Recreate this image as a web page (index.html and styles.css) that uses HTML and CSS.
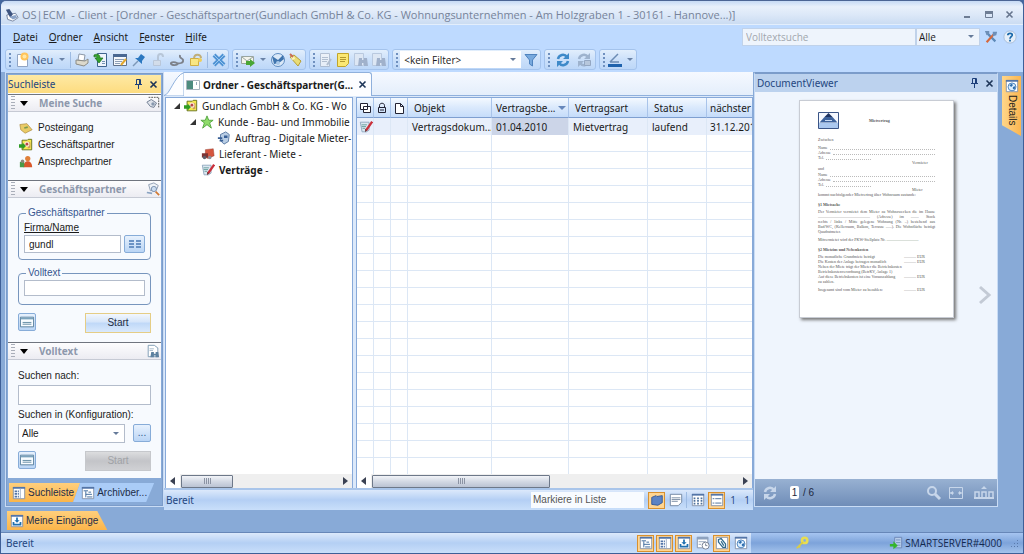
FILE: index.html
```html
<!DOCTYPE html>
<html lang="de">
<head>
<meta charset="utf-8">
<title>OS|ECM - Client</title>
<link rel="stylesheet" href="styles.css">
</head>
<body>
<svg class="defs" aria-hidden="true">
  <symbol id="tree" viewBox="0 0 16 16"><path fill="#fff" stroke="#7f8ea6" d="M1.500 1.500h13v13h-13z"/><path fill="#5375a8" d="M1 1h14v2H1z"/><path stroke="#2b5d94" fill="none" d="M3 5.500h5M5.500 6v7M5.500 9.500h7M7 12.500h6M8.500 7h3"/></symbol>
  <symbol id="panel" viewBox="0 0 16 16"><path fill="#fff" stroke="#7f8ea6" d="M1.500 1.500h13v13h-13z"/><path fill="#5375a8" d="M1 1h14v2H1zM3 5h3v2H3zM3 8h3v2H3zM3 11h3v2H3zM7 5h1v2H7zM7 8h1v2H7zM7 11h1v2H7z"/><path stroke="#9badc8" d="M9.500 3v11"/></symbol>
  <symbol id="inbox" viewBox="0 0 16 16"><path fill="#fff" stroke="#7f8ea6" d="M1.500 1.500h13v13h-13z"/><path fill="#5375a8" d="M1 1h14v2H1z"/><path fill="#1f70b0" d="M7 4h2v3h2L8 10 5 7h2zM3 9h2v2h6V9h2v4H3z"/></symbol>
  <symbol id="globe" viewBox="0 0 16 16"><path fill="#fff" stroke="#7f8ea6" d="M1.500 1.500h13v13h-13z"/><path fill="#5375a8" d="M1 1h14v2H1z"/><circle cx="8" cy="9" r="4.500" fill="#dceeff" stroke="#3a77b8"/><path fill="#2f6fae" d="M5 7l3-2 1 2-2 2zM9 9l3-1-1 4-2-1z"/></symbol>
  <symbol id="list" viewBox="0 0 16 16"><path fill="#fff" stroke="#7f8ea6" d="M1.500 1.500h13v13h-13z"/><path fill="#5375a8" d="M1 1h14v2H1z"/><path stroke="#3d6590" d="M3 6.500h2M6 6.500h7M3 11.500h2M6 11.500h7"/></symbol>
  <symbol id="cells" viewBox="0 0 16 16"><path fill="#fff" stroke="#7f8ea6" d="M1.500 1.500h13v13h-13z"/><path fill="#5375a8" d="M1 1h14v2H1z"/><path stroke="#4e719c" stroke-width="2" stroke-dasharray="2 2" d="M3 6h10M3 9h10M3 12h10"/></symbol>
  <symbol id="form" viewBox="0 0 18 16"><path fill="#f8fcff" stroke="#4f7896" d="M1.500 2.500h15v11h-15z"/><path fill="#7ba3bd" d="M2 3h14v2H2z"/><path stroke="#55809a" d="M4 8.500h10M4 10.500h10"/></symbol>
  <symbol id="pin" viewBox="0 0 9 10"><path fill="none" stroke="#1d3f7a" d="M2.500 5V.5h4V5M1 5.500h7M4.500 6v4"/><path stroke="#1d3f7a" d="M5.500 1v4"/></symbol>
  <symbol id="cross" viewBox="0 0 9 9"><path fill="none" stroke="currentColor" stroke-width="1.600" d="M1.500 1.500l6 6M7.500 1.500l-6 6"/></symbol>
  <symbol id="partner" viewBox="0 0 16 16"><path fill="#f4ea4e" stroke="#5f6a16" d="M3.500 2.500h6l1-1h4v12h-11z"/><path fill="#cf9b5c" d="M10 4l3 1v6l-3 1z"/><circle cx="9" cy="7" r="3" fill="#f8e3cb"/><path fill="#2f9c24" d="M0 7h4V5l4 4-4 4v-2H0z"/><circle cx="9" cy="7" r="1.500" fill="#b8434a"/></symbol>
  <symbol id="contract" viewBox="0 0 16 16"><path fill="#dbe7f1" stroke="#8ba5bb" d="M1.500 2.500h10v9l-3 2h-5z"/><path stroke="#5f9a96" d="M3 5.500h6M3 7.500h5M4 9.500h3"/><path stroke="#c9303b" stroke-width="2.500" d="M15 2L8 12"/><path fill="#633" d="M7 14l0-4 2 2z"/></symbol>
  <symbol id="refresh" viewBox="0 0 16 16"><path fill="none" stroke="currentColor" stroke-width="2.500" d="M3 7a5 5 0 0 1 9-2M13 9a5 5 0 0 1-9 2"/><path fill="currentColor" d="M14 1v6H8zM2 15V9h6z"/></symbol>
  <symbol id="binoc" viewBox="0 0 16 16"><path fill="#dde7f4" stroke="#b9c9df" d="M1.500 1.500h9v12h-9z"/><path fill="#a0b1cb" d="M6 6h3v2h2V6h3l1 8h-4v-3H9v3H5z"/></symbol>
</svg>

<div class="app">
  <header class="titlebar">
    <svg class="i16" viewBox="0 0 16 16"><path fill="#fff" stroke="#6b7c99" d="M2 8l10-2 3 5-6 4-6-2z"/><path fill="#3d5480" d="M1 2l4-1 4 6-3 4z"/><path fill="#8ba4c9" d="M5 10l7-2 2 3-5 2z"/></svg>
    <h1>OS|ECM &nbsp;- Client - [Ordner - Geschäftspartner(Gundlach GmbH &amp; Co. KG - Wohnungsunternehmen - Am Holzgraben 1 - 30161 - Hannove...)]</h1>
    <div class="winbtns">
      <button aria-label="Minimieren"><svg viewBox="0 0 9 9"><path fill="#6e7d94" d="M1 6h6v2H1z"/></svg></button>
      <button aria-label="Maximieren"><svg viewBox="0 0 9 9"><path fill="#6e7d94" d="M1 1h8v3H1z"/><path fill="none" stroke="#6e7d94" d="M1.500 1.500h7v6h-7z"/></svg></button>
      <button aria-label="Schließen"><svg viewBox="0 0 9 9"><use href="#cross"/></svg></button>
    </div>
  </header>

  <div class="menubar">
    <nav>
      <button><u>D</u>atei</button><button><u>O</u>rdner</button><button><u>A</u>nsicht</button><button><u>F</u>enster</button><button><u>H</u>ilfe</button>
    </nav>
    <div class="quick">
      <input type="text" placeholder="Volltextsuche" aria-label="Volltextsuche">
      <select aria-label="Suchbereich"><option>Alle</option></select>
      <button aria-label="Optionen"><svg class="i14" viewBox="0 0 16 16"><path stroke="#5d89b8" stroke-width="2.500" d="M3 3l10 10"/><path stroke="#d6683c" stroke-width="2.500" d="M11 5l-8 9"/><path fill="#6d8fb8" d="M1 1h5v3L3 6zM10 2l5 0-1 4-4 1z"/></svg></button>
      <button aria-label="Hilfe"><svg class="i14" viewBox="0 0 16 16"><circle cx="8" cy="8" r="7" fill="#e5effa" stroke="#a7bbd6"/><path fill="none" stroke="#1968aa" stroke-width="2" d="M5.500 6C5.500 3 11 3 10.500 6 10 7.500 8 8 8 10"/><path fill="#1968aa" d="M7 11h2v2H7z"/></svg></button>
    </div>
  </div>

  <div class="toolbars">
    <div class="tb tb1">
      <button class="new"><svg class="i16" viewBox="0 0 16 16"><path fill="#fff" stroke="#91a5c4" d="M3.500 2.500h6l4 4v8h-10z"/><circle cx="10.500" cy="4.500" r="4" fill="#ffc45c"/><circle cx="10.500" cy="4.500" r="2" fill="#ffe7a6"/></svg>Neu<i class="arr"></i></button>
      <i class="sep"></i>
      <button aria-label="Drucken"><svg class="i16" viewBox="0 0 16 16"><path fill="#fff" stroke="#8c98a8" d="M5 2l6 1-1 6-6-1z"/><path fill="#dcd9cc" stroke="#8b8b85" d="M2 8l9 1 3-2v4l-4 3-8-2z"/></svg></button>
      <button aria-label="Öffnen"><svg class="i16" viewBox="0 0 16 16"><path fill="#eef4fb" stroke="#3f648e" d="M4.500 1.500h9v13h-9z"/><path stroke="#7292b5" d="M9 9.500h3M9 11.500h3"/><path fill="#34a22d" stroke="#1a6e1a" stroke-width=".7" d="M1 3c4-2 6 0 6 3h3l-4 5-4-5h2C4 5 3 4 1 5z"/></svg></button>
      <button aria-label="Bearbeiten"><svg class="i16" viewBox="0 0 16 16"><path fill="#f5f8fc" stroke="#60718a" d="M1.500 2.500h13v11h-13z"/><path fill="#4a6892" d="M1 2h14v3H1z"/><path stroke="#8e9fb6" d="M3 7.500h9M3 9.500h7M3 11.500h5"/><path stroke="#e2a72c" stroke-width="2" d="M14 7l-5 6"/></svg></button>
      <button aria-label="Anheften"><svg class="i16" viewBox="0 0 16 16"><path stroke="#7d97b8" stroke-width="1.500" d="M2 14l5-5"/><path fill="#2c78c0" d="M4 6l3 0 3-4 4 3-3 4 0 3z"/></svg></button>
      <button aria-label="Entsperren" class="dim"><svg class="i16" viewBox="0 0 16 16"><path fill="none" stroke="#aebccd" stroke-width="2" d="M8 9V5c0-4 5-4 5 0"/><path fill="#d7dde5" stroke="#b6c0cf" d="M3.500 8.500h7v5h-7z"/></svg></button>
      <button aria-label="Verknüpfen"><svg class="i16" viewBox="0 0 16 16"><path fill="none" stroke="#7d828b" stroke-width="1.800" d="M9 12c-3 2-8 1-7-1 1-1 4-1 6 0s7 0 6-3c0-2-4-1-3-5"/></svg></button>
      <button aria-label="Rechte"><svg class="i16" viewBox="0 0 16 16"><path fill="none" stroke="#bfae7a" stroke-width="2" d="M6 7c0-6 7-5 7-1"/><path fill="#f8e683" stroke="#cfae45" d="M2.500 6.500h8v7h-8z"/><circle cx="12" cy="8" r="2" fill="#f0ce58"/></svg></button>
      <i class="sep"></i>
      <button aria-label="Löschen"><svg class="i16" viewBox="0 0 16 16"><path stroke="#4f93d4" stroke-width="4" d="M3 3l10 10M13 3L3 13"/><path stroke="#9cc8ef" d="M3 3l10 10M13 3L3 13"/></svg></button>
    </div>
    <div class="tb">
      <button aria-label="Senden"><svg class="i16" viewBox="0 0 16 16"><path fill="#f4f4ec" stroke="#9aa59f" d="M1.500 4.500h12v7h-12z"/><path fill="none" stroke="#9aa59f" d="M2 5l5 4 6-4"/><path fill="#49a634" d="M6 9h4V7l5 4-5 4v-2H6z"/></svg></button><i class="arr"></i>
      <button aria-label="Wiedervorlage"><svg class="i16" viewBox="0 0 16 16"><circle cx="8" cy="8" r="6.500" fill="#dbe9f8" stroke="#5f8dc0"/><path fill="#3f74ae" d="M2 4l6 4 5-5 1 4-5 4-5 1z"/><circle cx="8" cy="11" r="2" fill="#a9c8e8"/></svg></button>
      <button aria-label="Markieren"><svg class="i16" viewBox="0 0 16 16"><path fill="#e9dc76" stroke="#b59e37" d="M2 5l4-2 7 6-3 5z"/><path fill="#fbf5b7" d="M3 5l3-1 1 3-3 1z"/><path stroke="#c96d56" stroke-width="2" d="M2 2l3 3"/></svg></button>
    </div>
    <div class="tb">
      <button class="dim" aria-label="Dokument"><svg class="i16" viewBox="0 0 16 16"><path fill="#f3f5f8" stroke="#a6b3c6" d="M3.500 1.500h9v13h-9z"/><path stroke="#aab4c2" d="M5 5.500h6M5 7.500h6M5 9.500h5"/><path stroke="#aab4c2" stroke-width="2" d="M14 7l-4 6"/></svg></button>
      <button aria-label="Notiz"><svg class="i16" viewBox="0 0 16 16"><path fill="#fbe873" stroke="#c0a52b" d="M2.500 1.500h11v10l-3 3h-8z"/><path stroke="#b49a30" d="M5 5.500h6M5 7.500h6M5 9.500h5"/></svg></button>
      <button aria-label="Suchen"><svg class="i16"><use href="#binoc"/></svg></button>
      <button aria-label="Weitersuchen"><svg class="i16"><use href="#binoc"/></svg></button>
    </div>
    <div class="tb">
      <select class="filter" aria-label="Filter"><option>&lt;kein Filter&gt;</option></select>
      <button aria-label="Filtern"><svg class="i16" viewBox="0 0 16 16"><path fill="#78a9dd" stroke="#4f83be" d="M2 2.500h12L9.500 8v6l-3-2V8z"/></svg></button>
    </div>
    <div class="tb wide-gap">
      <button class="blue" aria-label="Aktualisieren"><svg class="i16"><use href="#refresh"/></svg></button>
      <button class="gray" aria-label="Anhalten"><svg class="i16" viewBox="0 0 16 16"><use href="#refresh"/><path fill="#b7c7dc" stroke="#94a7c2" d="M8.500 8.500h6v5h-6z"/></svg></button>
    </div>
    <div class="tb">
      <button aria-label="Zeichnen"><svg class="i16" viewBox="0 0 16 16"><path fill="#1e62ad" d="M1 12h14v3H1z"/><path fill="none" stroke="#6c8cb4" stroke-width="1.500" d="M3 10l8-8M3 10h9"/></svg></button><i class="arr"></i>
    </div>
  </div>

  <div class="work">
    <aside class="side">
      <div class="cap gold"><h2>Suchleiste</h2><button aria-label="Anheften"><svg class="pin"><use href="#pin"/></svg></button><button aria-label="Schließen"><svg class="x9"><use href="#cross"/></svg></button></div>
      <div class="sidebody">
        <section>
          <h3><i class="grip"></i><i class="tri"></i><span>Meine Suche</span><svg class="i14" viewBox="0 0 16 16"><path fill="none" stroke="#444" stroke-dasharray="2 1" d="M3 1.500h11.500V14"/><path fill="#dfe3ea" stroke="#66748a" d="M1 7l5-3 6 4-3 5-4-1z"/><circle cx="8" cy="9" r="2" fill="#8898ae"/></svg></h3>
          <ul class="links">
            <li><a href="#"><svg class="i14" viewBox="0 0 16 16"><path fill="#e9cb67" stroke="#a47f2f" stroke-width=".7" d="M1 4l8-1 6 7-8 4-5-4z"/><path stroke="#7a9a4c" stroke-width="2" d="M6 8l4-1"/></svg>Posteingang</a></li>
            <li><a href="#"><svg class="i14"><use href="#partner"/></svg>Geschäftspartner</a></li>
            <li><a href="#"><svg class="i14" viewBox="0 0 16 16"><circle cx="10" cy="4" r="3" fill="#e0803a"/><path fill="#d9572b" d="M5 14c0-9 10-9 10 0z"/><path fill="#4a9a48" d="M1 8h5v6H1z"/><circle cx="4" cy="7" r="2" fill="#8d8a7c"/></svg>Ansprechpartner</a></li>
          </ul>
        </section>
        <section>
          <h3><i class="grip"></i><i class="tri"></i><span>Geschäftspartner</span><svg class="i14" viewBox="0 0 16 16"><path fill="#eef2f7" stroke="#8998ae" d="M3 3l6-2 5 3-2 5-7 1z"/><circle cx="9" cy="8" r="3" fill="#cbdcf0" stroke="#7289a8"/><path fill="none" stroke="#8aa3c2" stroke-width="2" d="M1 12l6 1"/><path stroke="#d27a34" stroke-width="2" d="M11 11l4 4"/></svg></h3>
          <form class="form">
            <fieldset><legend>Geschäftspartner</legend>
              <label for="firma"><u>Firma/Name</u></label>
              <div class="line"><input id="firma" type="text" value="gundl"><button type="button" class="sq wide" aria-label="Auswahl"><svg viewBox="0 0 14 10"><path stroke="#6b93c5" stroke-width="2" d="M1 2h5M8 2h5M1 5h5M8 5h5M1 8h5M8 8h5"/></svg></button></div>
            </fieldset>
            <fieldset><legend>Volltext</legend><input type="text" aria-label="Volltext"></fieldset>
            <div class="acts"><button type="button" class="sq" aria-label="Maske"><svg><use href="#form"/></svg></button><button type="button" class="start">Start</button></div>
          </form>
        </section>
        <section>
          <h3><i class="grip"></i><i class="tri"></i><span>Volltext</span><svg class="i14" viewBox="0 0 16 16"><path fill="#fff" stroke="#7595af" d="M2.500 1.500h7l4 3v10h-11z"/><path stroke="#9db3c6" d="M4 5.500h5M4 7.500h4"/><path fill="#5c81a0" d="M6 9h3v2h2V9h3l1 6h-4v-2H9v2H5z"/></svg></h3>
          <form class="form low">
            <label for="nach">Suchen nach:</label>
            <input id="nach" type="text" class="tall">
            <label for="konf">Suchen in (Konfiguration):</label>
            <div class="line"><select id="konf"><option>Alle</option></select><button type="button" class="sq" aria-label="Mehr">...</button></div>
            <div class="acts"><button type="button" class="sq" aria-label="Maske"><svg><use href="#form"/></svg></button><button type="button" class="start" disabled>Start</button></div>
          </form>
        </section>
      </div>
      <div class="tabs">
        <button class="tab on"><svg class="i14"><use href="#panel"/></svg>Suchleiste</button><button class="tab"><svg class="i14"><use href="#tree"/></svg>Archivber...</button>
      </div>
    </aside>

    <main class="center">
      <div class="doctabs">
        <svg class="slope" viewBox="0 0 20 24" preserveAspectRatio="none"><path fill="#fcfdff" stroke="#8fb0dc" d="M0 23.500C6 23 10 4 20 .5V24H0"/></svg>
        <div class="doctab"><svg class="i14" viewBox="0 0 14 14"><path fill="#fff" stroke="#a7b3bd" d="M.5 2.500h13v9H.5z"/><path fill="#4d8b7e" d="M1 3h6v8H1z"/><path fill="#9ab" d="M10 4h1v3h-1z"/></svg><span>Ordner - Geschäftspartner(G...</span><button aria-label="Schließen"><svg class="x9"><use href="#cross"/></svg></button></div>
      </div>
      <div class="panes">
        <div class="pane treepane">
          <ul class="tree">
            <li class="l1"><i class="exp"></i><svg class="i14"><use href="#partner"/></svg>Gundlach GmbH &amp; Co. KG - Wo</li>
            <li class="l2"><i class="exp"></i><svg class="i14" viewBox="0 0 16 16"><path fill="#8fdc6a" stroke="#4fa23c" d="M8 1l2 5 5 0-4 3 2 6-5-4-5 4 2-6-4-3 5 0z"/></svg>Kunde - Bau- und Immobilie</li>
            <li class="l3"><svg class="i14" viewBox="0 0 16 16"><path fill="#b9cde4" stroke="#52749e" d="M4 4l6-3 4 3-1 8-5 3-4-4z"/><path fill="#385f95" d="M1 7h5v2H1zM3 10h4v2H3zM8 5h4v3H8z"/></svg>Auftrag - Digitale Mieter-</li>
            <li class="l2b"><svg class="i14" viewBox="0 0 16 16"><path fill="#d5563f" stroke="#8f3023" stroke-width=".5" d="M5 3l9-1 1 8-7 3-3-1z"/><path fill="#7d3434" d="M1 7h7v5H1z"/><circle cx="4" cy="12" r="2" fill="#5d5d68"/><circle cx="10" cy="12" r="2" fill="#8d8d96"/></svg>Lieferant - Miete -</li>
            <li class="l2b"><svg class="i14"><use href="#contract"/></svg><span><b>Verträge</b> -</span></li>
          </ul>
          <div class="hs"><i class="la"></i><i class="thumb t1"></i><i class="ra"></i></div>
        </div>
        <div class="pane gridpane">
          <div class="gridwrap">
            <table class="grid">
              <colgroup><col class="c1"><col class="c1"><col class="c1"><col class="c4"><col class="c5"><col class="c6"><col class="c7"><col class="c8"></colgroup>
              <thead><tr>
                <th><svg class="i12" viewBox="0 0 12 12"><path fill="#fff" stroke="#223" d="M1.500 1.500h7v6h-7zM4.500 4.500h7v6h-7z"/></svg></th>
                <th><svg class="i12" viewBox="0 0 12 12"><path fill="none" stroke="#223" d="M3.500 5V3.500c0-3 5-3 5 0V5M2.500 5.500h7v5h-7zM4 8h4"/></svg></th>
                <th><svg class="i12" viewBox="0 0 12 12"><path fill="#fff" stroke="#223" d="M2.500 1.500h5l3 3v7h-8zM7.500 1.500v3h3"/></svg></th>
                <th>Objekt</th><th>Vertragsbe...<i class="sort"></i></th><th>Vertragsart</th><th>Status</th><th>nächster</th>
              </tr></thead>
              <tbody>
                <tr class="sel"><td><svg class="i14"><use href="#contract"/></svg></td><td></td><td></td><td>Vertragsdokum...</td><td class="cur">01.04.2010</td><td>Mietvertrag</td><td>laufend</td><td>31.12.201</td></tr>
                <tr class="fill"><td></td><td></td><td></td><td></td><td></td><td></td><td></td><td></td></tr>
              </tbody>
            </table>
          </div>
          <div class="hs"><i class="la"></i><i class="thumb t2"></i><i class="ra"></i></div>
        </div>
      </div>
      <div class="docstatus">
        <span class="msg">Bereit</span>
        <input type="text" value="Markiere in Liste" aria-label="Markiere in Liste">
        <button class="ic act" aria-label="Ordner"><svg viewBox="0 0 16 16"><path fill="#5c83c4" stroke="#2f5596" d="M2 5l5-2 1 1 6-1v8l-5 3-7-1z"/></svg></button>
        <button class="ic" aria-label="Notiz"><svg viewBox="0 0 16 16"><path fill="#fff" stroke="#697f9c" d="M1.500 1.500h13v9l-4 4h-9z"/><path stroke="#6f829c" d="M3 5.500h10M3 7.500h10M3 9.500h7"/></svg></button>
        <i class="sep"></i>
        <button class="ic" aria-label="Kacheln"><svg><use href="#cells"/></svg></button>
        <button class="ic act" aria-label="Liste"><svg><use href="#list"/></svg></button>
        <span class="num">1</span><span class="num">1</span>
      </div>
    </main>

    <section class="viewer">
      <div class="cap"><h2>DocumentViewer</h2><button aria-label="Anheften"><svg class="pin"><use href="#pin"/></svg></button><button aria-label="Schließen"><svg class="x9"><use href="#cross"/></svg></button></div>
      <div class="stage">
        <article class="sheet">
          <div class="head"><svg viewBox="0 0 21 17"><path fill="#f5f8ff" stroke="#3a5486" d="M.5.500h20v16H.5z"/><path fill="#abc8ef" d="M1 11h19v5H1z"/><path fill="#1d3261" d="M10.500 1l4 4h-8z"/><path fill="#3d629c" d="M6.500 5h8l5 5.500h-18z"/><path stroke="#c9daf2" d="M7 8.500h7"/></svg><b>Mietvertrag</b></div>
          <p class="gap">Zwischen</p>
          <p class="fill">Name</p><p class="fill">Adresse</p><p class="fill half">Tel.</p><p class="who">Vermieter</p>
          <p class="und">und</p>
          <p class="fill">Name</p><p class="fill">Adresse</p><p class="fill half">Tel.</p><p class="who">Mieter</p>
          <p>kommt nachfolgender Mietvertrag über Wohnraum zustande:</p>
          <h4>§1 Mietsache</h4>
          <p class="j">Der Vermieter vermietet dem Mieter zu Wohnzwecken die im Hause</p>
          <p class="j">.................................................... (Adresse) im ........ Stock</p>
          <p class="j">rechts / links / Mitte gelegene Wohnung (Nr. ..) bestehend aus</p>
          <p class="j">Bad/WC, (Kellerraum, Balkon, Terrasse ......). Die Wohnfläche beträgt</p>
          <p class="gap">Quadratmeter.</p>
          <p>Mitvermietet wird der PKW-Stellplatz Nr. ................................</p>
          <h4>§2 Mietzins und Nebenkosten</h4>
          <p class="eur"><span>Die monatliche Grundmiete beträgt</span><span>............ EUR</span></p>
          <p class="eur"><span>Die Kosten der Anlage betragen monatlich</span><span>............ EUR</span></p>
          <p class="eur"><span>Neben der Miete trägt der Mieter die Betriebskosten<br>Betriebskostenverordnung (BetrKV, Anlage 1)</span><span></span></p>
          <p class="eur"><span>Auf diese Betriebskosten ist eine Vorauszahlung<br>zu zahlen.</span><span>............ EUR</span></p>
          <p class="eur last"><span>Insgesamt sind vom Mieter zu bezahlen:</span><span>............ EUR</span></p>
        </article>
        <button class="next" aria-label="Nächste Seite"><svg viewBox="0 0 14 20"><path fill="none" stroke="#c3cad5" stroke-width="3" d="M2 2l9 8-9 8"/></svg></button>
      </div>
      <div class="vbar">
        <button aria-label="Aktualisieren"><svg class="i16"><use href="#refresh"/></svg></button>
        <label class="page"><input type="text" value="1" aria-label="Seite"> / 6</label>
        <button class="push" aria-label="Zoom"><svg class="i16" viewBox="0 0 16 16"><circle cx="6" cy="6" r="4" fill="none" stroke="currentColor" stroke-width="2"/><path stroke="currentColor" stroke-width="3" d="M9 9l5 5"/></svg></button>
        <button aria-label="Breite"><svg class="i16" viewBox="0 0 16 16"><path fill="none" stroke="currentColor" d="M1.500 2.500h13v11h-13zM2 8h4M10 8h4"/><path fill="currentColor" d="M2 8l3-2v4zM14 8l-3-2v4z"/></svg></button>
        <button class="pages" aria-label="Seiten"><svg class="i20" viewBox="0 0 20 16"><path fill="none" stroke="currentColor" stroke-width="1.500" d="M1 7h4v6H1zM8 7h4v6H8zM15 7h4v6h-4z"/><path fill="currentColor" d="M0 12h20v2H0zM10 1l3 3H7z"/></svg></button>
      </div>
    </section>

    <div class="rail"><button><svg class="i14"><use href="#globe"/></svg><span>Details</span></button></div>
  </div>

  <div class="tabs bottom"><button class="tab on"><svg class="i14"><use href="#inbox"/></svg>Meine Eingänge</button></div>

  <footer class="status">
    <span class="msg">Bereit</span>
    <button class="ic act" aria-label="Baum"><svg><use href="#tree"/></svg></button>
    <button class="ic act" aria-label="Suchleiste"><svg><use href="#panel"/></svg></button>
    <button class="ic act" aria-label="Eingänge"><svg><use href="#inbox"/></svg></button>
    <button class="ic" aria-label="Verlauf"><svg viewBox="0 0 16 16"><path fill="#fff" stroke="#7f8ea6" d="M1.500 1.500h12v12h-12z"/><path fill="#8da2bf" d="M1 1h13v3H1z"/><path stroke="#8ea0b8" d="M3 6.500h8M3 9.500h3"/><circle cx="11" cy="11" r="4" fill="#fff" stroke="#6b7688"/><path fill="none" stroke="#6b7688" d="M11 8.500V11h2"/></svg></button>
    <button class="ic act" aria-label="Anlagen"><svg viewBox="0 0 16 16"><path fill="#fff" stroke="#7f8ea6" d="M1.500 1.500h13v13h-13z"/><path fill="none" stroke="#2f6a8e" stroke-width="1.500" d="M4 4l3-1 5 6v4H9L4 7zM7 6l3 5"/></svg></button>
    <button class="ic" aria-label="Web"><svg><use href="#globe"/></svg></button>
    <div class="server">
      <svg class="i14" viewBox="0 0 16 16"><circle cx="11" cy="5" r="3" fill="none" stroke="#e8dd52" stroke-width="3"/><path stroke="#d9cc45" stroke-width="2" d="M9 7l-7 7M4 11l2 2"/></svg>
      <span><svg class="i14" viewBox="0 0 16 16"><path fill="#b7cdea" stroke="#6a84b3" d="M6.500 1.500h8v12h-8z"/><path stroke="#7590bd" d="M8 4.500h5M8 7.500h5M8 10.500h5"/><path fill="#35b52c" d="M1 9h4V6l5 5-5 4v-3H1z"/></svg>SMARTSERVER#4000</span>
      <i class="size"></i>
    </div>
  </footer>
</div>
</body>
</html>
```
FILE: styles.css
```css
* { box-sizing: border-box; }
body { margin: 0; color: #1a1a1a; font: 11px/16px "Open Sans", "Noto Sans", sans-serif; background: #44679f; }
h1, h2, h3, h4, p, ul, fieldset { margin: 0; padding: 0; font-weight: normal; list-style: none; }
button, input, select { font: inherit; color: inherit; margin: 0; padding: 0; border: 0; border-radius: 0; background: none; min-width: 0; }
button { display: flex; align-items: center; justify-content: center; flex: none; }
svg { display: block; flex: none; }
i { flex: none; }
.defs { display: none; }
.i12 { width: 12px; height: 12px; }
.i14 { width: 14px; height: 14px; }
.i16 { width: 16px; height: 16px; }
.i20 { width: 20px; height: 16px; }
.x9 { width: 9px; height: 9px; color: #1d3558; }
.pin { width: 9px; height: 10px; }
.app { height: 100vh; display: flex; flex-direction: column; background: #88aad7; border: 1px solid #3e5f97; border-top-color: #4c6595; border-radius: 6px 6px 0 0; overflow: hidden; }

.titlebar { flex: none; height: 24px; display: flex; align-items: center; gap: 3px; padding: 4px 9px 0 4px; background: linear-gradient(#c6daf5, #e8f0fb 25%, #dce8f8 60%, #cbdcf2); border-bottom: 1px solid #e3eefc; color: #76839a; }
.titlebar .i16 { width: 14px; }
.titlebar h1 { flex: 1; font-size: inherit; white-space: nowrap; overflow: hidden; }
.winbtns { display: flex; gap: 12px; color: #66758d; }
.winbtns svg { width: 9px; height: 9px; }

.menubar { flex: none; height: 24px; display: flex; justify-content: space-between; align-items: center; padding: 0 4px 0 12px; background: #bedaff; }
.menubar nav { display: flex; gap: 11px; font: 10px/16px "Noto Sans", sans-serif; }
.quick { display: flex; align-items: center; font-size: 10px; }
.quick input { width: 174px; height: 18px; padding: 0 3px; background: #eef4fc; border: 1px solid #c0d2ea; }
.quick input::placeholder { color: #a2a7ae; opacity: 1; }
.quick select { width: 64px; height: 18px; margin-right: 1px; border: 1px solid #c0d2ea; padding-left: 2px; background-color: #eef4fc; }
.quick button { width: 19px; }
select { appearance: none; background: #fff url("data:image/svg+xml,%3Csvg xmlns='http://www.w3.org/2000/svg' width='11' height='4'%3E%3Cpath fill='%23657a99' d='M0 0h6L3 3z'/%3E%3C/svg%3E") no-repeat right center; }

.toolbars { flex: none; display: flex; gap: 3px; height: 23px; padding: 0 4px; background: #bedaff; }
.tb { display: flex; align-items: center; gap: 2px; height: 21px; padding: 0 1px 0 7px; border: 1px solid #a4c3ec; border-radius: 3px; background: linear-gradient(#e2eefc, #cbe0fa 50%, #bdd7f8); }
.tb1 { gap: 3px; }
.tb::before { content: ""; width: 2px; height: 14px; margin-left: -4px; background: repeating-linear-gradient(#6f90bf 0 2px, transparent 2px 4px); }
.tb button { height: 18px; min-width: 16px; }
.tb .new { gap: 2px; color: #33517f; }
.dim { opacity: .75; }
.arr { border: 3px solid transparent; border-top-color: #6a82a6; border-bottom: 0; margin: 0 2px; }
.tb .new .arr { margin-left: 4px; }
.wide-gap { gap: 5px; padding-right: 3px; }
.sep { width: 1px; height: 16px; background: #9dbbe2; }
.filter { width: 121px; height: 17px; padding-left: 4px; font-size: 10px; }
.blue { color: #3f8ac9; }
.gray { color: #9eb3ce; }

.work { flex: 1; min-height: 0; display: flex; padding-left: 4px; }
.side { flex: none; width: 159px; margin-bottom: 3px; display: flex; flex-direction: column; border: 1px solid #c9dcf5; box-shadow: inset 0 0 0 1px #7b9cca; padding: 2px; font: 10px/16px "Liberation Sans", Arial, sans-serif; }
.cap { flex: none; height: 18px; display: flex; align-items: center; gap: 6px; padding: 0 3px 0 2px; background: #bcd2ee; color: #24477f; font: 10px/16px "Noto Sans", sans-serif; }
.cap h2 { flex: 1; font-size: inherit; }
.gold { background: linear-gradient(#fee9a4, #fddc80); }
.side .cap { height: 18px; padding-left: 0; }
.sidebody { flex: 1; background: #f7fafe; padding-top: 1px; overflow: hidden; }
.side h3 { height: 18px; display: flex; align-items: center; padding: 0 1px 0 3px; border-top: 1px solid #70757f; border-bottom: 1px solid #c6cad4; background: linear-gradient(#fdfdfe, #ececf2); color: #8d98ac; font: bold 10px/16px "Noto Sans", sans-serif; }
.side h3 span { flex: 1; }
.grip { width: 4px; height: 14px; background: repeating-linear-gradient(#a9aeb9 0 1px, transparent 1px 3px); }
.tri { border: 4px solid transparent; border-top: 5px solid #000; border-bottom: 0; margin: 0 11px 0 5px; }
.links { padding: 7px 0 10px 11px; }
.links a { display: flex; align-items: center; gap: 5px; height: 17px; color: inherit; text-decoration: none; }
.form { padding: 8px 10px 9px; display: flex; flex-direction: column; }
fieldset { border: 1px solid #7795bd; border-radius: 4px; padding: 0 5px 6px; min-width: 0; }
fieldset + fieldset { margin-top: 6px; padding-bottom: 8px; }
legend { margin-left: 2px; padding: 0 2px; color: #35558f; line-height: 14px; }
label { line-height: 14px; }
fieldset label { display: block; line-height: 15px; height: 15px; }
.form input { width: 100%; height: 16px; padding: 0 4px; border: 1px solid #b3bccb; background: #fff; display: block; }
.line { display: flex; gap: 3px; }
.form .line input { flex: 1; height: 18px; }
.sq { width: 18px; height: 18px; border: 1px solid #87acd8; border-radius: 2px; background: linear-gradient(#e7f1fd, #bad5f5); color: #2d568e; }
.sq svg { width: 16px; height: 14px; }
.wide { width: 21px; }
.wide svg { width: 14px; height: 10px; }
.acts { display: flex; justify-content: space-between; margin-top: 8px; }
.start { width: 66px; height: 20px; border: 1px solid #e5cd85; background: linear-gradient(#f2f7fe, #d5e5fa 45%, #bfd8f8 50%, #d9e9fc); color: #222c44; }
.start:disabled { border-color: #c6c8cc; background: linear-gradient(#dcdddf, #c3c4c8 50%, #d0d1d4); color: #a0a2a6; }
.low label { margin-bottom: 2px; }
.form .tall { height: 20px; margin-bottom: 3px; }
.low .line { justify-content: space-between; }
.low select { width: 107px; height: 19px; padding-left: 3px; border: 1px solid #b3bccb; }
.low { padding-top: 9px; }
.tabs { flex: none; display: flex; height: 26px; padding: 5px 0 2px 2px; font: 10px/16px "Liberation Sans", Arial, sans-serif; }
.tab { gap: 3px; padding: 0 9px 0 3px; background: #aaccf7; color: #1d2c48; white-space: nowrap; clip-path: polygon(0 0, calc(100% - 8px) 0, 100% 100%, 0 100%); }
.tabs .on { background: linear-gradient(#ffcf7c, #fbb54a); clip-path: polygon(0 0, calc(100% - 1px) 0, calc(100% - 8px) 100%, 0 100%); }
.side .tabs { padding-left: 1px; }
.side .tab { gap: 2px; padding-right: 7px; }
.side .tab + .tab { clip-path: polygon(7px 0, 100% 0, calc(100% - 8px) 100%, 0 100%); margin-left: -8px; padding-left: 8px; }
.bottom { height: 22px; padding: 1px 0 2px 6px; }
.bottom .on { gap: 2px; padding: 0 9px 0 3px; clip-path: polygon(0 0, calc(100% - 10px) 0, 100% 100%, 0 100%); }

.center { flex: 1; min-width: 0; display: flex; flex-direction: column; background: #dce9fa; }
.doctabs { flex: none; height: 24px; display: flex; background: linear-gradient(#f5f9ff, #e4eefb); border-bottom: 1px solid #8fb0dc; }
.slope { width: 20px; height: 24px; }
.doctab { display: flex; align-items: center; gap: 3px; height: 24px; padding: 0 4px 0 2px; background: #fcfdff; border: 1px solid #8fb0dc; border-width: 1px 1px 0 0; border-radius: 0 3px 0 0; font: bold 10px/16px "Noto Sans", sans-serif; }
.doctab button { margin-left: 2px; }
.panes { flex: 1; min-height: 0; display: flex; gap: 3px; padding: 1px 0 0 1px; }
.pane { display: flex; flex-direction: column; min-width: 0; min-height: 0; background: #fff; border: 1px solid #87a9d9; border-bottom: 0; }
.treepane { flex: 0 0 188px; }
.gridpane { flex: 1; }
.tree { flex: 1; overflow: hidden; white-space: nowrap; font: 10px/16px "Noto Sans", sans-serif; }
.tree li { display: flex; align-items: center; gap: 4px; height: 16px; }
.tree .l1 { padding-left: 8px; }
.tree .l2 { padding-left: 24px; }
.tree .l2b { padding-left: 35px; }
.tree .l3 { padding-left: 51px; }
.exp { border-left: 6px solid transparent; border-bottom: 6px solid #333; }
.hs { flex: none; height: 14px; display: flex; align-items: center; padding: 0 4px; background: linear-gradient(90deg, #fff 14px, #efefef 14px); }
.la { border: 4px solid transparent; border-right: 5px solid #3a4152; border-left: 0; margin-right: 6px; }
.ra { border: 4px solid transparent; border-left: 5px solid #3a4152; border-right: 0; margin-left: auto; }
.thumb { height: 13px; border: 1px solid #6d7889; border-radius: 1px; background: repeating-linear-gradient(90deg, #8b93a3 0 1px, transparent 1px 2px) center / 7px 6px no-repeat, linear-gradient(#f2f4f8, #d3d9e4 50%, #bac3d3); }
.t1 { width: 52px; }
.t2 { width: 178px; }
.gridwrap { flex: 1; min-height: 0; overflow: hidden; }
.grid { table-layout: fixed; width: 100%; height: 100%; border-collapse: separate; border-spacing: 0; }
.c1 { width: 17px; }
.c4 { width: 84px; }
.c5 { width: 77px; }
.c6 { width: 79px; }
.c7 { width: 59px; }
.grid th, .grid td { padding: 0 0 0 4px; text-align: left; font: 10px/16px "Noto Sans", sans-serif; white-space: nowrap; overflow: hidden; border-right: 1px solid #dce7f5; }
.grid th { height: 20px; padding-left: 6px; border-right-color: #a9c4ea; border-bottom: 1px solid #7e9fd0; background: linear-gradient(#f4f9ff, #dae9fc 50%, #c5dcfa); }
.grid th:last-child, .grid td:last-child { padding-left: 3px; border-right: 0; }
.grid th:nth-child(-n+3), .grid td:nth-child(-n+3) { padding-left: 2px; }
.grid th:nth-child(5) { padding-left: 4px; }
.grid .sel td { height: 17px; background: #e8effb; }
.grid .sel .cur { background: #ccd5e8; }
.grid .fill td { background: repeating-linear-gradient(transparent 0 16px, #dce7f5 16px 17px); }
.sort { display: inline-block; border: 4px solid transparent; border-top-color: #6687bb; border-bottom: 0; margin-left: 2px; vertical-align: 2px; }
.docstatus { flex: none; height: 22px; display: flex; align-items: center; gap: 2px; padding: 0 0 0 2px; border-top: 2px solid #a9c5ea; background: linear-gradient(#dce9fb, #b4cff4 50%, #c9dffa); color: #24477f; }
.msg { flex: 1; font: 10px/16px "Noto Sans", sans-serif; }
.docstatus input { width: 113px; height: 16px; margin-right: 2px; padding: 0 2px; background: #f8fbff; color: #555; font: 10px/16px "Liberation Sans", Arial, sans-serif; }
.ic { width: 17px; height: 17px; }
.ic svg { width: 14px; height: 14px; }
.act { border: 1px solid #d8902f; background: #ffd591; }
.num { width: 12px; text-align: center; font-size: 10px; }

.viewer { flex: none; width: 244px; margin: 0 0 3px 1px; display: flex; flex-direction: column; border: 1px solid #c9dcf5; border-top: 2px solid #7b9cca; background: #eff5fd; }
.stage { flex: 1; min-height: 0; display: flex; padding: 8px 3px 0 44px; position: relative; }
.sheet { width: 155px; height: 218px; padding: 11px 18px 0; background: #fff; border: 1px solid #c8ccd4; box-shadow: 2px 2px 3px #777; font: 4px/5px "Liberation Serif", serif; color: #555; white-space: nowrap; }
.head { display: flex; align-items: center; gap: 30px; margin-bottom: 8px; }
.head svg { width: 21px; height: 17px; }
.sheet .gap { margin-bottom: 3px; }
.sheet .fill { display: flex; gap: 2px; }
.sheet .fill::after { content: ""; flex: 1; height: 4px; border-bottom: 1px dotted #bbb; }
.sheet .half { width: 53px; }
.who { padding-left: 94px; }
.und { margin: 1px 0; }
.sheet h4 { font-weight: bold; margin: 5px 0 2px; }
.j { text-align: justify; text-align-last: justify; }
.eur { display: flex; justify-content: space-between; padding-right: 10px; }
.last { margin-top: 3px; }
.next { position: absolute; right: 5px; top: 193px; }
.next svg { width: 14px; height: 20px; }
.vbar { flex: none; height: 27px; display: flex; align-items: center; gap: 6px; padding: 0 3px 0 7px; background: linear-gradient(#98b1d2, #6f8db8); color: #c7d6ea; }
.page { display: flex; align-items: center; gap: 4px; margin-left: 6px; color: #1b2740; font: 10px/14px "Liberation Sans", sans-serif; }
.page input { width: 9px; height: 13px; background: #fff; border-radius: 2px; text-align: center; }
.push { margin-left: auto; }
.pages { margin-left: 4px; }

.rail { flex: none; width: 25px; padding: 4px 0 0 4px; }
.rail button { width: 19px; height: 60px; flex-direction: column; justify-content: flex-start; gap: 2px; padding-top: 3px; background: linear-gradient(90deg, #ffd68a, #fbb650); clip-path: polygon(0 0, 100% 0, 100% 100%, 0 82%); font: 10px/14px "Liberation Sans", Arial, sans-serif; }
.rail span { writing-mode: vertical-rl; }

.status { flex: none; height: 21px; display: flex; align-items: center; gap: 2px; padding-left: 5px; border-top: 1px solid #6787b8; background: linear-gradient(#dce9fb, #b4cff4 50%, #c9dffa); color: #24477f; }
.server { align-self: stretch; flex: none; width: 272px; display: flex; align-items: center; justify-content: flex-end; gap: 6px; padding-right: 4px; background: linear-gradient(#a6c5f1, #7da3da 50%, #a4c3ec); color: #13294f; font: 10px/14px "Open Sans", sans-serif; }
.server > svg { margin-right: auto; margin-left: 44px; }
.server span { display: flex; gap: 2px; align-items: center; }
.size { width: 9px; height: 9px; margin-left: 2px; background: radial-gradient(circle, #5776a8 1px, transparent 1px) 0 0 / 3px 3px; clip-path: polygon(100% 0, 100% 100%, 0 100%); }
```
